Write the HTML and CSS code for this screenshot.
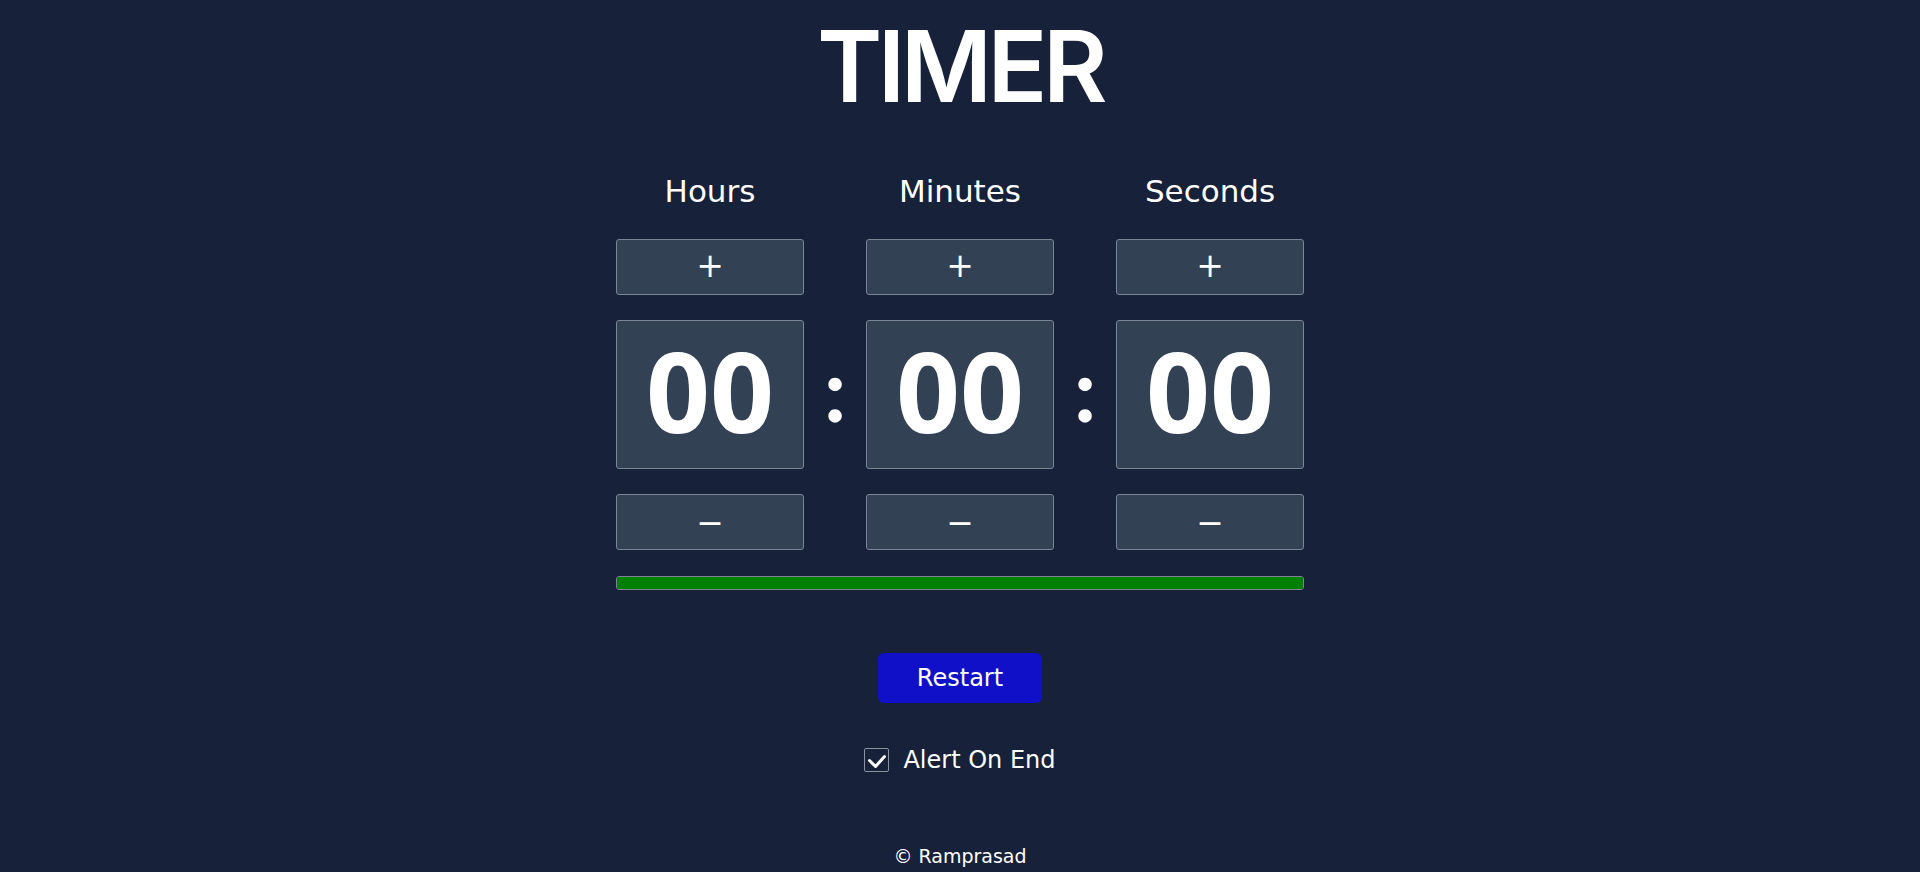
FILE: index.html
```html
<!DOCTYPE html>
<html lang="en">
<head>
<meta charset="utf-8">
<title>Timer</title>
<link rel="stylesheet" href="styles.css">
</head>
<body>
<main class="timer">
  <h1 class="title">TIMER</h1>
  <div class="grid">
    <div class="label c1">Hours</div>
    <div class="label c3">Minutes</div>
    <div class="label c5">Seconds</div>

    <button class="step plus c1">+</button>
    <button class="step plus c3">+</button>
    <button class="step plus c5">+</button>

    <div class="digits c1">00</div>
    <div class="colon c2">:</div>
    <div class="digits c3">00</div>
    <div class="colon c4">:</div>
    <div class="digits c5">00</div>

    <button class="step c1">−</button>
    <button class="step c3">−</button>
    <button class="step c5">−</button>
  </div>
  <div class="progress"><div class="progress-fill" style="width:100%"></div></div>
  <button class="restart">Restart</button>
  <label class="alert">
    <span class="checkbox">
      <svg width="25" height="24" viewBox="0 0 25 24"><path d="M5.5 12.5 L11.5 18.5 L20.5 8.5" fill="none" stroke="#ffffff" stroke-width="3" stroke-linecap="round" stroke-linejoin="round"/></svg>
    </span>
    <span class="alert-text">Alert On End</span>
  </label>
</main>
<footer class="footer">© Ramprasad</footer>
</body>
</html>
```

FILE: styles.css
```css
html, body {
  margin: 0;
  padding: 0;
}
body {
  background: #172139;
  color: #ffffff;
  font-family: "DejaVu Sans", sans-serif;
  height: 872px;
  overflow: hidden;
}
.timer {
  width: 688px;
  margin: 0 auto;
  display: flex;
  flex-direction: column;
  align-items: stretch;
}
.title {
  margin: 16px 0 0;
  font-family: "Inter", sans-serif;
  font-weight: 600;
  font-size: 99px;
  line-height: 100px;
  letter-spacing: -4.5px;
  text-align: center;
}
.grid {
  margin-top: 53px;
  display: grid;
  grid-template-columns: 188px 62px 188px 62px 188px;
  grid-template-rows: 45px 56px 149px 56px;
  row-gap: 25px;
}
.c1 { grid-column: 1; }
.c2 { grid-column: 2; }
.c3 { grid-column: 3; }
.c4 { grid-column: 4; }
.c5 { grid-column: 5; }
.label {
  font-size: 31px;
  line-height: 44px;
  text-align: center;
}
.step {
  box-sizing: border-box;
  margin: 0;
  padding: 0;
  background: #334155;
  border: 1px solid #7c8596;
  border-radius: 3px;
  color: #ffffff;
  font-family: "DejaVu Sans", sans-serif;
  font-size: 33px;
  line-height: 1;
  display: flex;
  align-items: center;
  justify-content: center;
}
.step.plus {
  padding-bottom: 4px;
}
.digits {
  box-sizing: border-box;
  background: #334155;
  border: 1px solid #7c8596;
  border-radius: 3px;
  font-family: "Open Sans", sans-serif;
  font-weight: 700;
  font-size: 112px;
  line-height: 1;
  display: flex;
  align-items: center;
  justify-content: center;
  padding-bottom: 10px;
}
.colon {
  font-family: "Lato", sans-serif;
  font-weight: 700;
  font-size: 88px;
  line-height: 1;
  display: flex;
  align-items: center;
  justify-content: center;
  padding-bottom: 13px;
}
.progress {
  box-sizing: border-box;
  margin-top: 26px;
  height: 14px;
  border: 1px solid #7c8596;
  border-radius: 3px;
  overflow: hidden;
  background: #334155;
}
.progress-fill {
  height: 100%;
  background: #008000;
}
.restart {
  align-self: center;
  margin-top: 63px;
  width: 164px;
  height: 50px;
  border: none;
  border-radius: 6px;
  background: #1010c8;
  color: #ffffff;
  font-family: "DejaVu Sans", sans-serif;
  font-size: 24px;
  padding: 0;
}
.alert {
  align-self: center;
  margin-top: 45px;
  display: flex;
  align-items: center;
  gap: 14px;
  height: 24px;
}
.checkbox {
  box-sizing: border-box;
  width: 25px;
  height: 24px;
  border: 1px solid #8a93a3;
  border-radius: 2px;
  display: flex;
}
.checkbox svg {
  margin: -1px;
}
.alert-text {
  font-size: 24px;
  line-height: 24px;
}
.footer {
  margin-top: 72px;
  text-align: center;
  font-size: 19px;
  line-height: 24px;
}
```
